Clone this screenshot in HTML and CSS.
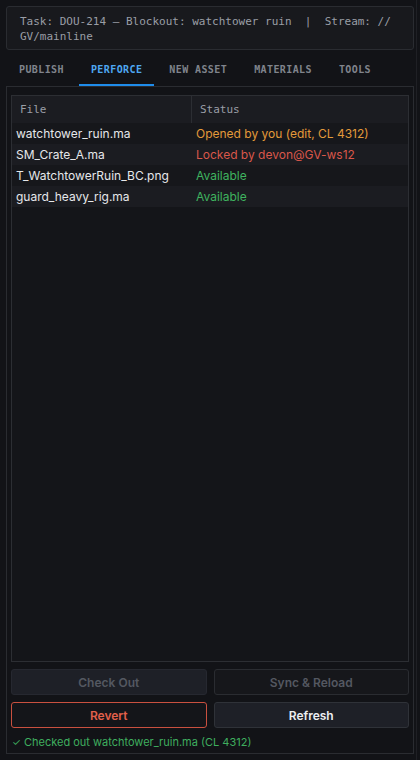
FILE: index.html
```html
<!DOCTYPE html>
<html lang="en">
<head>
    <meta charset="UTF-8">
    <meta name="viewport" content="width=device-width, initial-scale=1.0">
    <title>Pipeline Tools - Perforce</title>
    <link rel="stylesheet" href="styles.css">
</head>
<body>
    <div class="task-bar">Task: DOU-214 — Blockout: watchtower ruin  |  Stream: //<wbr>GV/mainline</div>

    <nav class="tabs">
        <span class="tab">Publish</span>
        <span class="tab active">Perforce</span>
        <span class="tab">New Asset</span>
        <span class="tab">Materials</span>
        <span class="tab">Tools</span>
    </nav>

    <section class="panel">
        <div class="file-table">
            <div class="file-head">
                <div class="head-cell">File</div>
                <div class="head-cell">Status</div>
            </div>
            <div class="file-row">
                <div class="cell">watchtower_ruin.ma</div>
                <div class="cell status-edit">Opened by you (edit, CL 4312)</div>
            </div>
            <div class="file-row">
                <div class="cell">SM_Crate_A.ma</div>
                <div class="cell status-locked">Locked by devon@GV-ws12</div>
            </div>
            <div class="file-row">
                <div class="cell">T_WatchtowerRuin_BC.png</div>
                <div class="cell status-free">Available</div>
            </div>
            <div class="file-row">
                <div class="cell">guard_heavy_rig.ma</div>
                <div class="cell status-free">Available</div>
            </div>
        </div>

        <div class="actions">
            <button class="btn btn-disabled" disabled>Check Out</button>
            <button class="btn btn-disabled dark" disabled>Sync &amp; Reload</button>
            <button class="btn btn-danger">Revert</button>
            <button class="btn">Refresh</button>
        </div>

        <div class="status-line"><span class="tick">✓</span> Checked out watchtower_ruin.ma (CL 4312)</div>
    </section>
</body>
</html>
```

FILE: styles.css
```css
html, body {
    height: 100%;
}

body {
    margin: 0;
    padding: 6px 6px 6px 6px;
    box-sizing: border-box;
    background-color: #121317;
    font-family: Inter, "Noto Sans", sans-serif;
    display: flex;
    flex-direction: column;
    width: 420px;
    height: 760px;
    box-shadow: inset -3px 0 0 #121317, inset -4px 0 0 #1f2025;
}

.task-bar {
    background-color: #18191d;
    border: 1px solid #2a2c31;
    border-radius: 3px;
    padding: 7px 13px 5px;
    font-family: "DejaVu Sans Mono", monospace;
    font-size: 11px;
    line-height: 15px;
    color: #9a9ea6;
    white-space: pre-wrap;
}

.tabs {
    display: flex;
    gap: 3px;
    margin-top: 3px;
    padding-left: 1px;
}

.tab {
    padding: 10px 12px 8px;
    border-bottom: 2px solid transparent;
    font-family: "DejaVu Sans Mono", monospace;
    font-size: 10px;
    font-weight: 600;
    line-height: 13px;
    letter-spacing: 0.4px;
    text-transform: uppercase;
    color: #80848c;
}

.tab.active {
    color: #4ea8f2;
    border-bottom-color: #1f8ceb;
}

.panel {
    flex: 1;
    display: flex;
    flex-direction: column;
    gap: 7px;
    border: 1px solid #2a2c31;
    padding: 8px 4px 3px;
    background-color: #121317;
    min-height: 0;
}

.file-table {
    flex: 1;
    border: 1px solid #2c2e33;
    background-color: #141519;
}

.file-head,
.file-row {
    display: grid;
    grid-template-columns: 180px 1fr;
}

.file-head {
    background-color: #1b1c21;
    height: 27px;
    align-items: stretch;
}

.head-cell {
    padding-left: 8px;
    font-family: "DejaVu Sans Mono", monospace;
    font-size: 11px;
    line-height: 27px;
    color: #9a9ea6;
}

.head-cell:first-child {
    border-right: 1px solid #2c2e33;
}

.file-row {
    height: 21px;
    background-color: #16171b;
}

.file-row:nth-child(odd) {
    background-color: #1b1c21;
}

.cell {
    padding-left: 4px;
    font-size: 12px;
    line-height: 21px;
    color: #e6e7ea;
    white-space: nowrap;
}

.status-edit {
    color: #e39a3a;
}

.status-locked {
    color: #d9574a;
}

.status-free {
    color: #3fb35f;
}

.actions {
    display: grid;
    grid-template-columns: 1fr 1fr;
    gap: 7px;
}

.btn {
    height: 26px;
    border: 1px solid #2f3238;
    border-radius: 3px;
    background-color: #1e2027;
    color: #eceef1;
    font-family: Inter, "Noto Sans", sans-serif;
    font-size: 12px;
    font-weight: 600;
    cursor: pointer;
}

.btn-disabled {
    color: #545861;
    border-color: #262830;
    cursor: default;
}

.btn-disabled.dark {
    background-color: #16171b;
    border-color: #2a2c31;
}

.btn-danger {
    background-color: #141519;
    border-color: #c9503f;
    color: #e2604b;
}

.status-line {
    font-size: 11px;
    line-height: 15px;
    color: #3fae5f;
    padding-left: 1px;
}

.tick {
    font-size: 10px;
}
```
